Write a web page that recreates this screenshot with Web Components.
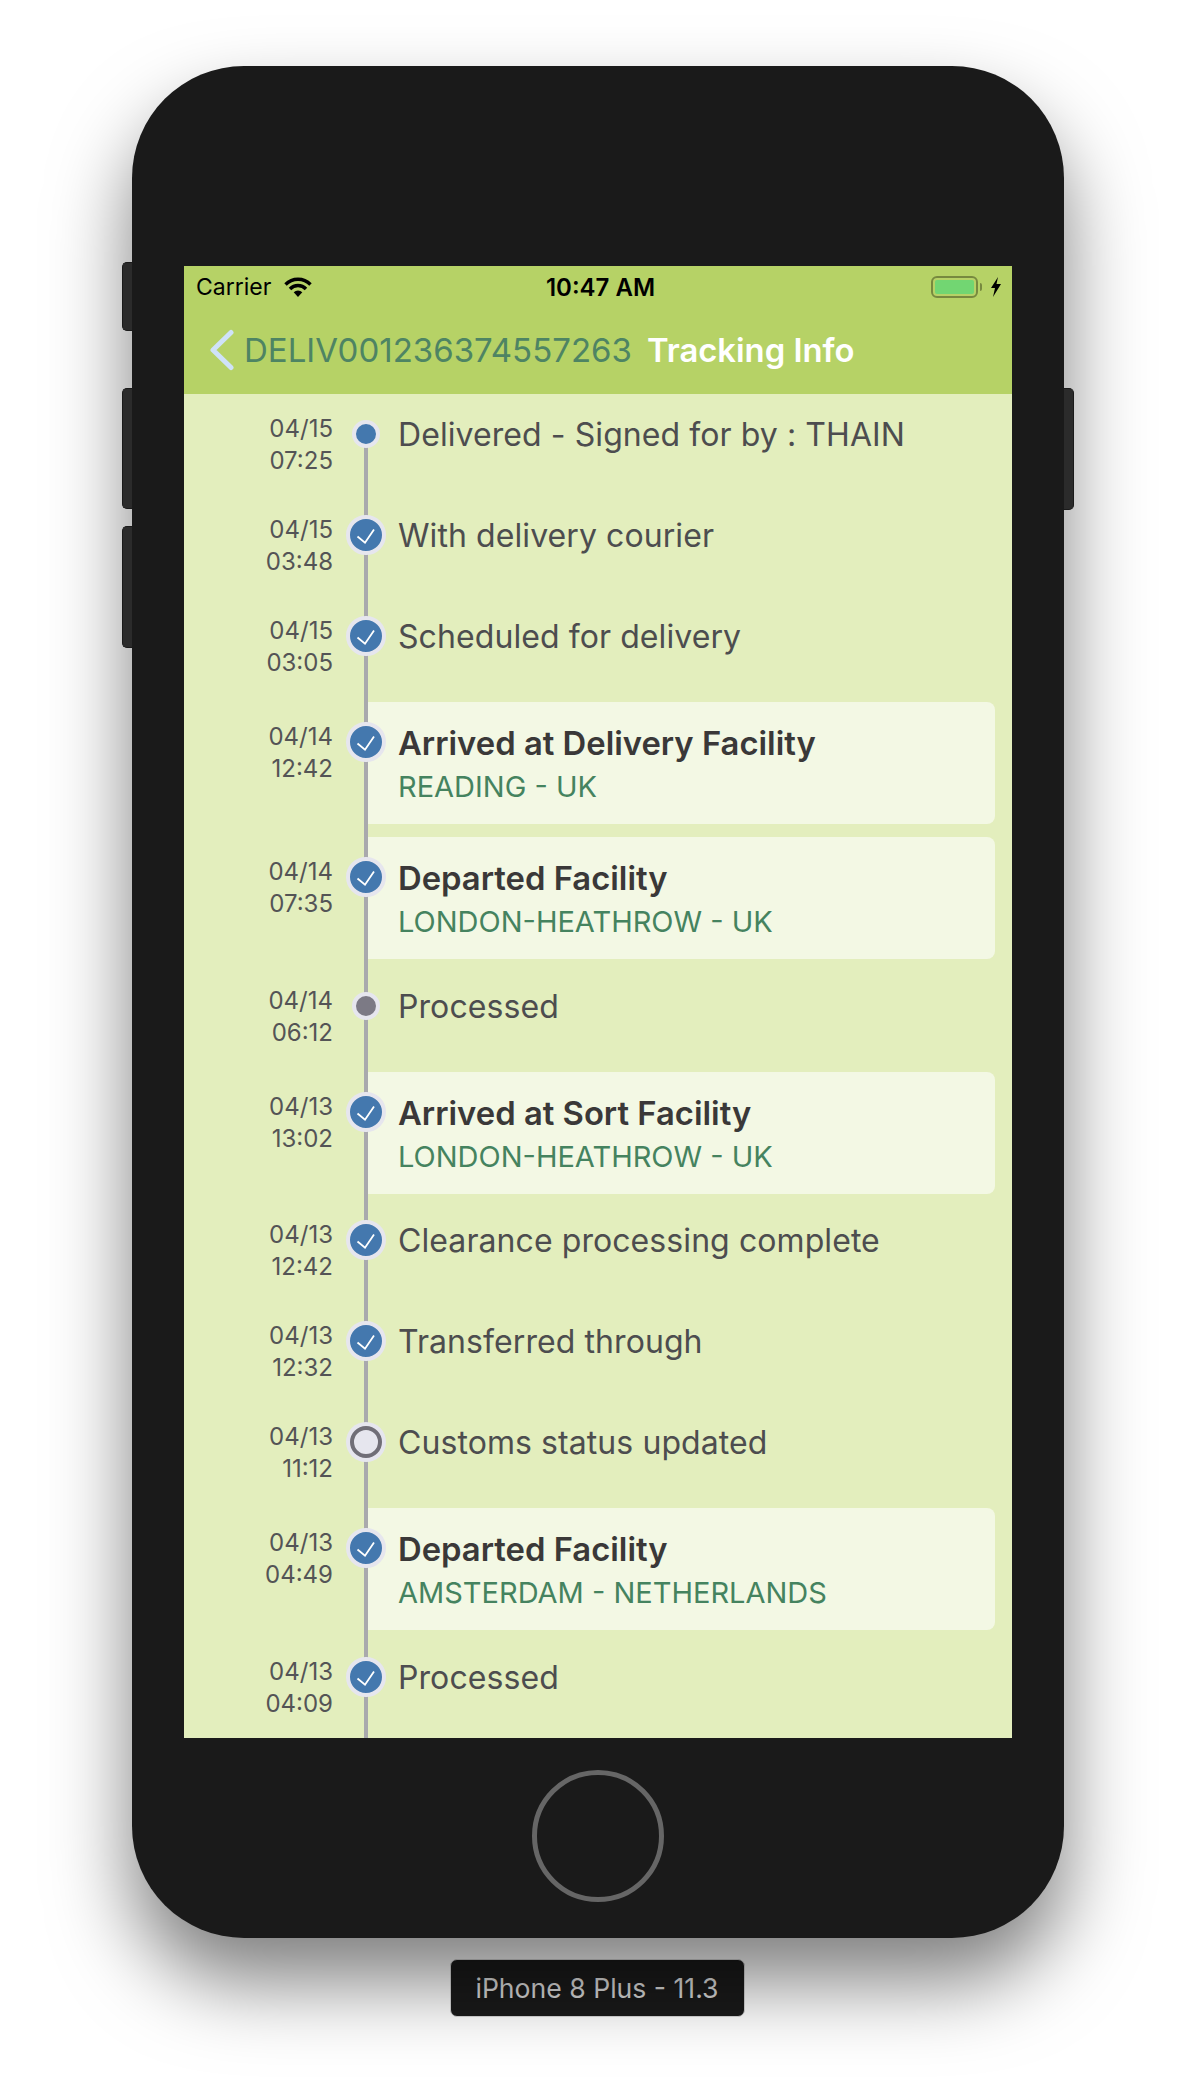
<!DOCTYPE html>
<html>
<head>
<meta charset="utf-8">
<title>Tracking Info</title>
<style>
  html, body { margin: 0; padding: 0; background: #fff; }
  body { font-family: Inter, "Noto Sans", sans-serif; }
</style>
</head>
<body>
<device-frame label="iPhone 8 Plus - 11.3">
  <status-bar></status-bar>
  <nav-bar back="DELIV001236374557263" heading="Tracking Info"></nav-bar>
  <tracking-list>
    <track-event date="04/15" time="07:25" state="current">Delivered - Signed for by : THAIN</track-event>
    <track-event date="04/15" time="03:48" state="done">With delivery courier</track-event>
    <track-event date="04/15" time="03:05" state="done">Scheduled for delivery</track-event>
    <track-event date="04/14" time="12:42" state="done" place="READING - UK">Arrived at Delivery Facility</track-event>
    <track-event date="04/14" time="07:35" state="done" place="LONDON-HEATHROW - UK">Departed Facility</track-event>
    <track-event date="04/14" time="06:12" state="muted">Processed</track-event>
    <track-event date="04/13" time="13:02" state="done" place="LONDON-HEATHROW - UK">Arrived at Sort Facility</track-event>
    <track-event date="04/13" time="12:42" state="done">Clearance processing complete</track-event>
    <track-event date="04/13" time="12:32" state="done">Transferred through</track-event>
    <track-event date="04/13" time="11:12" state="open">Customs status updated</track-event>
    <track-event date="04/13" time="04:49" state="done" place="AMSTERDAM - NETHERLANDS">Departed Facility</track-event>
    <track-event date="04/13" time="04:09" state="done">Processed</track-event>
  </tracking-list>
</device-frame>

<script>
class DeviceFrame extends HTMLElement {
  constructor () {
    super()
    this.shadow = this.attachShadow({ mode: 'open' })
  }

  connectedCallback () {
    this.shadow.innerHTML = /* html */`
      <style>
        :host {
          display: flex;
          flex-direction: column;
          align-items: center;
          padding-top: 66px;
          height: 2034px;
          font-family: Inter, "Noto Sans", sans-serif;
        }
        .body {
          position: relative;
          box-sizing: border-box;
          width: 932px;
          height: 1872px;
          padding-top: 200px;
          border-radius: 112px;
          background: #1a1a1a;
          box-shadow: 0 44px 80px rgba(0, 0, 0, 0.5);
          display: flex;
          flex-direction: column;
          align-items: center;
        }
        .screen {
          width: 828px;
          height: 1472px;
          background: #e3eebd;
          display: flex;
          flex-direction: column;
          overflow: hidden;
        }
        .home {
          box-sizing: border-box;
          width: 132px;
          height: 132px;
          margin-top: 32px;
          border: 5px solid #666;
          border-radius: 50%;
        }
        .key {
          position: absolute;
          width: 10px;
          background: #2b2b2b;
          border: 1px solid #1a1a1a;
          box-sizing: border-box;
        }
        .left { left: -10px; border-radius: 5px 0 0 5px; border-right: 0; }
        .right { right: -10px; border-radius: 0 5px 5px 0; border-left: 0; }
        .label {
          margin: 21px 2px 0 0;
          box-sizing: border-box;
          width: 295px;
          height: 58px;
          display: flex;
          align-items: center;
          justify-content: center;
          background: #1a1a1a;
          border: 1px solid #d8d8d8;
          border-radius: 7px;
          color: #dcdcdc;
          font-size: 26.6px;
        }
      </style>
      <div class="body">
        <div class="key left" style="top: 196px; height: 69px"></div>
        <div class="key left" style="top: 322px; height: 121px"></div>
        <div class="key left" style="top: 460px; height: 122px"></div>
        <div class="key right" style="top: 322px; height: 122px"></div>
        <div class="screen"><slot></slot></div>
        <div class="home"></div>
      </div>
      <div class="label">${this.getAttribute('label')}</div>
    `
  }
}

class StatusBar extends HTMLElement {
  constructor () {
    super()
    this.shadow = this.attachShadow({ mode: 'open' })
  }

  connectedCallback () {
    this.shadow.innerHTML = /* html */`
      <style>
        :host {
          display: grid;
          grid-template-columns: 1fr auto 1fr;
          align-items: center;
          height: 40px;
          padding: 2px 10px 0 12px;
          box-sizing: border-box;
          background: #b6d266;
          color: #000;
          font-size: 23px;
        }
        .side { display: flex; align-items: center; }
        .end { justify-content: flex-end; }
        .clock { margin-left: 3px; font-size: 24px; font-weight: 600; }
        .wifi { margin-left: 13px; }
        .battery {
          box-sizing: border-box;
          width: 47px;
          height: 22px;
          padding: 2px;
          border: 2px solid #77893f;
          border-radius: 6px;
        }
        .battery i { display: block; height: 100%; background: #72d672; border-radius: 2px; }
        .cap { width: 2px; height: 8px; margin-left: 2px; background: #77893f; border-radius: 0 2px 2px 0; }
        .bolt { margin-left: 8px; }
      </style>
      <div class="side">
        <span>Carrier</span>
        <svg class="wifi" width="28" height="20" viewBox="0 0 28 20">
          <path d="M1.5 7.5A17.5 17.5 0 0 1 26.5 7.5M6 12A11 11 0 0 1 22 12" fill="none" stroke="#000" stroke-width="3.4"/>
          <path d="M9.7 15.2A6.3 6.3 0 0 1 18.3 15.2L14 20Z" fill="#000"/>
        </svg>
      </div>
      <div class="clock">10:47 AM</div>
      <div class="side end">
        <div class="battery"><i></i></div>
        <div class="cap"></div>
        <svg class="bolt" width="12" height="20" viewBox="0 0 12 20">
          <path d="M8 0L1 11H5L3 20L11 7H6.5Z" fill="#000"/>
        </svg>
      </div>
    `
  }
}

class NavBar extends HTMLElement {
  constructor () {
    super()
    this.shadow = this.attachShadow({ mode: 'open' })
  }

  connectedCallback () {
    this.shadow.innerHTML = /* html */`
      <style>
        :host {
          display: flex;
          align-items: center;
          height: 88px;
          padding-left: 26px;
          box-sizing: border-box;
          background: #b6d266;
          font-size: 33px;
        }
        svg { flex: none; }
        .back { margin-left: 10px; color: #4e8463; }
        .heading { margin-left: 15px; color: #fff; font-size: 32.8px; font-weight: 600; }
      </style>
      <svg width="24" height="42" viewBox="0 0 24 42">
        <path d="M21 3.5L3 21L21 38.5" fill="none" stroke="#cfe2f8" stroke-width="5" stroke-linecap="round" stroke-linejoin="round"/>
      </svg>
      <span class="back">${this.getAttribute('back')}</span>
      <span class="heading">${this.getAttribute('heading')}</span>
    `
  }
}

class TrackingList extends HTMLElement {
  constructor () {
    super()
    this.shadow = this.attachShadow({ mode: 'open' })
  }

  connectedCallback () {
    this.shadow.innerHTML = /* html */`
      <style>
        :host {
          display: flex;
          flex-direction: column;
          flex: 1;
          min-height: 0;
          overflow: hidden;
        }
      </style>
      <slot></slot>
    `
  }
}

const CHECK = '<svg width="32" height="32" viewBox="0 0 32 32"><path d="M7.5 17.5L15 23.7L24 10.5" fill="none" stroke="#fff" stroke-width="1.8"/></svg>'

class TrackEvent extends HTMLElement {
  constructor () {
    super()
    this.shadow = this.attachShadow({ mode: 'open' })
  }

  connectedCallback () {
    const place = this.getAttribute('place')
    const state = this.getAttribute('state')
    const isFollowUp = place && this.previousElementSibling && this.previousElementSibling.hasAttribute('place')

    this.shadow.innerHTML = /* html */`
      <style>
        :host {
          display: flex;
          position: relative;
          flex: none;
          height: ${place ? 133.5 : 101}px;
          margin-top: ${isFollowUp ? 1.5 : 0}px;
        }
        .when {
          width: 149px;
          padding-top: ${place ? 24 : 19}px;
          box-sizing: border-box;
          text-align: right;
          color: #545456;
          font-size: 24px;
          line-height: 32px;
        }
        .rail { position: relative; width: 35px; }
        .rail::before {
          content: '';
          position: absolute;
          top: ${this.previousElementSibling ? (isFollowUp ? '-2px' : '0') : '40px'};
          bottom: 0;
          right: 0;
          width: 4px;
          background: #a9a9ad;
        }
        .dot {
          position: absolute;
          left: 182px;
          top: ${place ? 45 : 40}px;
          transform: translate(-50%, -50%);
          box-sizing: content-box;
          border-radius: 50%;
          display: flex;
          background: var(--fill);
        }
        .done { --fill: #4478ae; width: 32px; height: 32px; border: 4px solid #e6e6ee; }
        .current { --fill: #4478ae; width: 20px; height: 20px; border: 4px solid #e6e6ee; }
        .muted { --fill: #7c7a85; width: 20px; height: 20px; border: 4px solid #e6e6ee; }
        .open { --fill: #e6e6ee; width: 24px; height: 24px; border: 4px solid #706e77; box-shadow: 0 0 0 4px #e6e6ee; }
        .content { flex: 1; min-width: 0; }
        .plain {
          padding: 19px 0 0 30px;
          color: #4d4d4f;
          font-size: 32px;
          line-height: 44px;
          letter-spacing: 0.08px;
        }
        .card {
          margin: 5px 17px 0 0;
          height: 122px;
          padding: 19px 0 0 30px;
          box-sizing: border-box;
          border-radius: 0 8px 8px 0;
          background: #f3f8e4;
        }
        .title {
          color: #3a3838;
          font-size: 32.8px;
          font-weight: 600;
          line-height: 44px;
        }
        .place {
          margin-top: 5px;
          color: #45835f;
          font-size: 29px;
          line-height: 34px;
        }
      </style>
      <div class="when">${this.getAttribute('date')}<br>${this.getAttribute('time')}</div>
      <div class="rail"></div>
      <div class="content">
        ${place
          ? `<div class="card"><div class="title"><slot></slot></div><div class="place">${place}</div></div>`
          : '<div class="plain"><slot></slot></div>'}
      </div>
      <div class="dot ${state}">${state === 'done' ? CHECK : ''}</div>
    `
  }
}

customElements.define('device-frame', DeviceFrame)
customElements.define('status-bar', StatusBar)
customElements.define('nav-bar', NavBar)
customElements.define('tracking-list', TrackingList)
customElements.define('track-event', TrackEvent)
</script>
</body>
</html>
